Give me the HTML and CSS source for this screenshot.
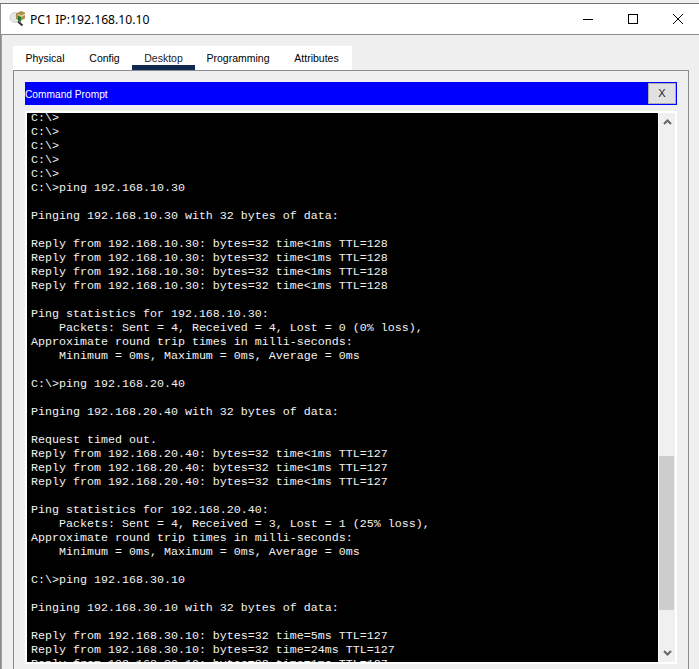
FILE: index.html
```html
<!DOCTYPE html>
<html lang="en">
<head>
<meta charset="utf-8">
<title>PC1</title>
<link rel="stylesheet" href="styles.css">
</head>
<body>
<div class="window">
  <header class="titlebar">
    <svg class="appicon" width="18" height="18" viewBox="0 0 18 18">
      <circle cx="7" cy="7.500" r="5" fill="#e6e6e6" stroke="#cfcfcf"/>
      <path d="M10 11.500l4.500 4" stroke="#2b2b2b" stroke-width="1.800"/>
      <path d="M8 3.500l5-2.500 4 1.500v6l-5 2.500-4-2z" fill="#b08f4c"/>
      <path d="M10 4l3 1.500 4-2v1.500l-4 2-3-1.500z" fill="#e6d8a8"/>
      <path d="M10 5.500l3 1.500v5l-3-1.500z" fill="#1d7a33"/>
    </svg>
    <span class="title">PC1 IP:192.168.10.10</span>
    <div class="controls">
      <svg width="10" height="10" viewBox="0 0 10 10"><path d="M0 5.500h10" stroke="#000"/></svg>
      <svg width="10" height="10" viewBox="0 0 10 10"><rect x=".5" y=".5" width="9" height="9" fill="none" stroke="#000"/></svg>
      <svg width="10" height="10" viewBox="0 0 10 10"><path d="M0 0l10 10M10 0L0 10" stroke="#000" stroke-width="1"/></svg>
    </div>
  </header>
  <main class="body">
    <nav class="tabs">
      <span class="tab">Physical</span>
      <span class="tab">Config</span>
      <span class="tab active">Desktop</span>
      <span class="tab">Programming</span>
      <span class="tab">Attributes</span>
    </nav>
    <section class="panel">
      <div class="appbar">
        <span class="apptitle">Command Prompt</span>
        <span class="closebtn">X</span>
      </div>
      <div class="frame">
        <pre class="terminal">C:\&gt;
C:\&gt;
C:\&gt;
C:\&gt;
C:\&gt;
C:\&gt;ping 192.168.10.30

Pinging 192.168.10.30 with 32 bytes of data:

Reply from 192.168.10.30: bytes=32 time&lt;1ms TTL=128
Reply from 192.168.10.30: bytes=32 time&lt;1ms TTL=128
Reply from 192.168.10.30: bytes=32 time&lt;1ms TTL=128
Reply from 192.168.10.30: bytes=32 time&lt;1ms TTL=128

Ping statistics for 192.168.10.30:
    Packets: Sent = 4, Received = 4, Lost = 0 (0% loss),
Approximate round trip times in milli-seconds:
    Minimum = 0ms, Maximum = 0ms, Average = 0ms

C:\&gt;ping 192.168.20.40

Pinging 192.168.20.40 with 32 bytes of data:

Request timed out.
Reply from 192.168.20.40: bytes=32 time&lt;1ms TTL=127
Reply from 192.168.20.40: bytes=32 time&lt;1ms TTL=127
Reply from 192.168.20.40: bytes=32 time&lt;1ms TTL=127

Ping statistics for 192.168.20.40:
    Packets: Sent = 4, Received = 3, Lost = 1 (25% loss),
Approximate round trip times in milli-seconds:
    Minimum = 0ms, Maximum = 0ms, Average = 0ms

C:\&gt;ping 192.168.30.10

Pinging 192.168.30.10 with 32 bytes of data:

Reply from 192.168.30.10: bytes=32 time=5ms TTL=127
Reply from 192.168.30.10: bytes=32 time=24ms TTL=127
Reply from 192.168.30.10: bytes=32 time=1ms TTL=127</pre>
        <div class="scrollbar">
          <svg class="arrow" width="9" height="6" viewBox="0 0 9 6"><path d="M1 5l3.500-3.500L8 5" fill="none" stroke="#666" stroke-width="2"/></svg>
          <div class="track"><div class="thumb"></div></div>
          <svg class="arrow" width="9" height="6" viewBox="0 0 9 6"><path d="M1 1l3.500 3.500L8 1" fill="none" stroke="#666" stroke-width="2"/></svg>
        </div>
      </div>
    </section>
  </main>
</div>
</body>
</html>
```
FILE: styles.css
```css
* { box-sizing: border-box; }
html, body { margin: 0; height: 100%; overflow: hidden; }
body { background: #efefef; padding-top: 3px; }
.window {
  height: 666px;
  display: flex;
  flex-direction: column;
  border-top: 1px solid #6f7378;
  border-left: 1px solid #888c90;
  overflow: hidden;
}
.titlebar {
  height: 31px;
  flex: none;
  display: flex;
  align-items: center;
  background: #fff;
  border-bottom: 1px solid #888c90;
  padding-left: 7px;
}
.appicon { margin-right: 4px; flex: none; }
.title { font: 12.2px "Noto Sans", sans-serif; color: #000; }
.controls {
  margin-left: auto;
  display: flex;
  gap: 35px;
  padding-right: 16px;
}
.body {
  flex: 1;
  min-height: 0;
  display: flex;
  flex-direction: column;
  padding: 11px 10px 0 11px;
  background: #efefef;
  border-left: 1px solid #a0a0a0;
}
.tabs {
  display: grid;
  grid-template-columns: 64px 55px 63px 86px 71px;
  grid-template-rows: 24px;
  align-self: flex-start;
  background: #fff;
  height: 24px;
  flex: none;
}
.tab {
  text-align: center;
  font: 10.5px/24px "Liberation Sans", sans-serif;
  color: #000;
}
.tab.active { border-bottom: 5px solid #0f2a50; color: #1a1a2a; }
.panel {
  flex: 1;
  min-height: 0;
  border: 1px solid #888c90;
  border-bottom: 0;
  padding: 11px 11px 0;
}
.appbar {
  height: 23px;
  background: #0000ff;
  display: flex;
  align-items: center;
  justify-content: space-between;
  padding-right: 1px;
}
.apptitle { font: 10.2px "Liberation Sans", sans-serif; color: #fff; padding-top: 1px; }
.closebtn {
  width: 28px;
  height: 21px;
  background: #e1e1e1;
  border: 1px solid #adadad;
  font: 11px/19px "Liberation Sans", sans-serif;
  color: #222;
  text-align: center;
}
.frame {
  margin-top: 6px;
  height: 553px;
  display: flex;
  background: #fff;
  padding: 2px;
}
.terminal {
  margin: 0 1px 0 0;
  flex: 1;
  min-width: 0;
  overflow: hidden;
  background: #000;
  color: #f2f2f2;
  font: 11.67px/14px "Liberation Mono", monospace;
  padding: 0 0 0 4px;
}
.terminal::before { content: ""; display: block; margin-top: -2px; }
.scrollbar {
  width: 16px;
  flex: none;
  background: #f0f0f0;
  display: flex;
  flex-direction: column;
  align-items: center;
  padding: 6px 0;
  gap: 5px;
}
.arrow { flex: none; }
.track { flex: 1; width: 100%; position: relative; }
.thumb {
  position: absolute;
  left: 0;
  right: 1px;
  top: 326px;
  height: 154px;
  background: #cdcdcd;
}
```
